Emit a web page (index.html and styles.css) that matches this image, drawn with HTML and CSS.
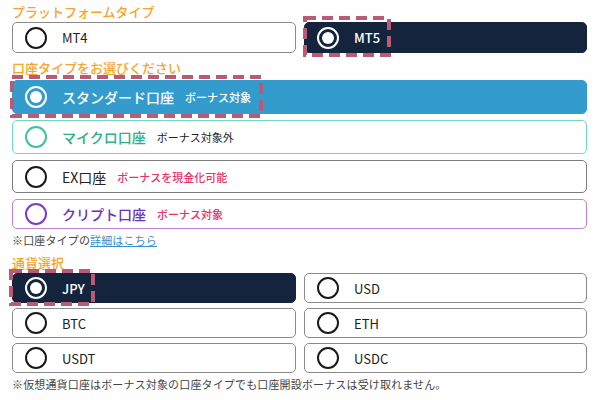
FILE: index.html
```html
<!DOCTYPE html>
<html lang="ja">
<head>
<meta charset="utf-8">
<link rel="stylesheet" href="styles.css">
</head>
<body>
<div class="form">
  <div class="label lab-platform">プラットフォームタイプ</div>
  <div class="grid2 platform">
    <div class="opt"><span class="radio"></span><span class="val">MT4</span></div>
    <div class="opt dark"><span class="radio on"></span><span class="val">MT5</span>
      <svg class="hl hl-mt5"><rect class="dash"/></svg></div>
  </div>

  <div class="label lab-account">口座タイプをお選びください</div>
  <div class="accounts">
    <div class="acc std"><span class="radio on"></span><span class="name">スタンダード口座</span><span class="tag">ボーナス対象</span>
      <svg class="hl hl-std"><rect class="dash"/></svg></div>
    <div class="acc micro"><span class="radio"></span><span class="name">マイクロ口座</span><span class="tag">ボーナス対象外</span></div>
    <div class="acc ex"><span class="radio"></span><span class="name">EX口座</span><span class="tag pink">ボーナスを現金化可能</span></div>
    <div class="acc crypto"><span class="radio"></span><span class="name">クリプト口座</span><span class="tag pink">ボーナス対象</span></div>
  </div>
  <p class="note note-acc">※口座タイプの<a href="#">詳細はこちら</a></p>

  <div class="label lab-cur">通貨選択</div>
  <div class="grid2 currency">
    <div class="opt cur dark"><span class="radio on"></span><span class="val">JPY</span>
      <svg class="hl hl-jpy"><rect class="dash"/></svg></div>
    <div class="opt cur"><span class="radio"></span><span class="val">USD</span></div>
    <div class="opt cur"><span class="radio"></span><span class="val">BTC</span></div>
    <div class="opt cur"><span class="radio"></span><span class="val">ETH</span></div>
    <div class="opt cur"><span class="radio"></span><span class="val">USDT</span></div>
    <div class="opt cur"><span class="radio"></span><span class="val">USDC</span></div>
  </div>
  <p class="note note-foot">※仮想通貨口座はボーナス対象の口座タイプでも口座開設ボーナスは受け取れません。</p>
</div>
</body>
</html>
```

FILE: styles.css
```css
* { box-sizing: border-box; }
html, body { margin: 0; padding: 0; background: #fefefe; }
body {
  font-family: "Noto Sans CJK JP", "Noto Sans", sans-serif;
  color: #222;
}
.form {
  width: 600px;
  padding: 3px 13px 0 12px;
}
.label {
  color: #f6a52c;
  font-size: 13px;
  line-height: 18px;
  font-weight: 500;
}
.lab-platform { margin-bottom: 1px; }
.lab-account { margin-top: 6px; margin-bottom: 3px; }
.lab-cur { margin-top: 6px; margin-bottom: 1px; }

.grid2 {
  display: grid;
  grid-template-columns: 284px 283px;
  column-gap: 8px;
  row-gap: 5px;
}
.opt {
  position: relative;
  display: flex;
  align-items: center;
  height: 31px;
  padding-left: 12px;
  border: 1px solid #8a8a8a;
  border-radius: 5px;
  background: #fff;
}
.opt.cur { height: 30px; }
.opt.dark {
  background: #14243c;
  border-color: #14243c;
  color: #fff;
}
.val {
  margin-left: 15px;
  font-size: 13px;
  font-weight: 400;
}
.opt.dark .val { font-weight: 500; }

.radio {
  flex: none;
  width: 22px;
  height: 22px;
  border: 2px solid #1a1a1a;
  border-radius: 50%;
  position: relative;
}
.radio.on { border-color: #fff; }
.radio.on::after {
  content: "";
  position: absolute;
  left: 3px; top: 3px;
  width: 12px; height: 12px;
  border-radius: 50%;
  background: #fff;
}

.accounts {
  display: flex;
  flex-direction: column;
  gap: 6px;
}
.acc {
  position: relative;
  display: flex;
  align-items: center;
  padding-left: 12px;
  border: 1px solid #7a7a7a;
  border-radius: 5px;
  background: #fff;
}
.acc .name {
  margin-left: 15px;
  font-size: 14px;
  font-weight: 400;
}
.acc .tag {
  margin-left: 11px;
  font-size: 11px;
  font-weight: 400;
}
.acc .tag.pink { color: #e5336c; font-weight: 500; }

.std { height: 34px; background: #349bcd; border-color: #349bcd; color: #fff; }
.std .name { font-weight: 500; }
.std .tag { font-weight: 500; }
.micro { height: 34px; border-color: #72d7c1; }
.micro .radio { border-color: #3cc3a0; }
.micro .name { color: #2eae8c; font-weight: 500; }
.ex { height: 33px; border-color: #7c7c7c; }
.crypto { height: 30px; border-color: #bb84d8; }
.crypto .radio { border-color: #7a3cc8; }
.crypto .name { color: #6b34b5; font-weight: 500; }

.note {
  margin: 0;
  font-size: 11px;
  line-height: 16px;
  color: #444;
  letter-spacing: 0.15px;
}
.note a { color: #3a8fd0; text-decoration: underline; }
.note-acc { margin-top: 3px; }
.note-foot { margin-top: 3px; }

/* dashed highlight overlays */
.hl {
  position: absolute;
  overflow: visible;
  pointer-events: none;
}
.hl .dash {
  x: 2px; y: 2px;
  width: calc(100% - 4px);
  height: calc(100% - 4px);
  fill: none;
  stroke: #b95b74;
  stroke-width: 4;
  stroke-dasharray: 11 6;
}
.hl-mt5 { left: -2px; top: -7px; width: 88px; height: 41px; }
.hl-std { left: -3px; top: -6px; width: 253px; height: 43px; }
.hl-jpy { left: -4px; top: -5px; width: 86px; height: 37px; }
```
